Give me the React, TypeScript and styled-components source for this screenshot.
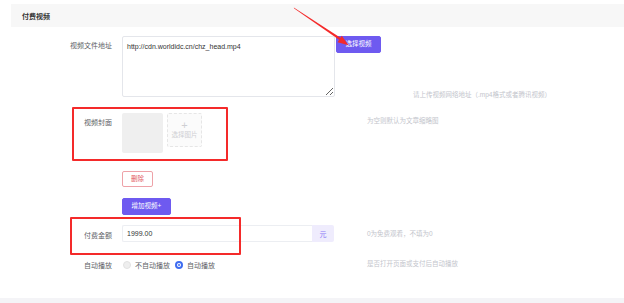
import React from 'react';
import styled, { createGlobalStyle } from 'styled-components';

const GlobalStyle = createGlobalStyle`
  html, body {
    margin: 0;
    padding: 0;
    background: #f4f4f7;
  }
  body {
    font-family: "Liberation Sans", "Noto Sans CJK SC", sans-serif;
    color: #606266;
  }
`;

const Card = styled.div`
  position: relative;
  width: 624px;
  height: 298px;
  background: #ffffff;
  padding: 4px 0 0 11px;
  box-sizing: border-box;
  overflow: hidden;
`;

const SectionHeader = styled.div`
  height: 23px;
  background: #f7f7f7;
  padding-left: 11px;
  display: flex;
  align-items: center;
  font-size: 7px;
  font-weight: bold;
  color: #333;
`;

const Form = styled.div`
  display: flex;
  flex-direction: column;
  margin-left: -11px;
`;

const Row = styled.div<{ $mt: number }>`
  display: flex;
  align-items: flex-start;
  margin-top: ${p => p.$mt}px;
`;

const Label = styled.div<{ $pt?: number }>`
  width: 122px;
  padding-right: 10px;
  padding-top: ${p => p.$pt ?? 5}px;
  box-sizing: border-box;
  text-align: right;
  font-size: 7px;
  line-height: 10px;
  color: #606266;
  flex-shrink: 0;
`;

const Indent = styled.div`
  width: 122px;
  flex-shrink: 0;
`;

const Field = styled.div`
  width: 213px;
  flex-shrink: 0;
  display: flex;
  align-items: flex-start;
`;

const TextArea = styled.textarea`
  width: 213px;
  height: 61px;
  box-sizing: border-box;
  border: 1px solid #e4e6eb;
  border-radius: 2px;
  padding: 5px 4px;
  font-family: "Liberation Sans", "Noto Sans CJK SC", sans-serif;
  font-size: 7px;
  line-height: 10px;
  color: #333;
  resize: vertical;
  outline: none;
`;

const SideColumn = styled.div`
  height: 61px;
  margin-left: 1px;
  display: flex;
  flex-direction: column;
  justify-content: space-between;
  align-items: flex-start;
`;

const Button = styled.button<{ $w: number; $h: number; $variant?: 'primary' | 'danger' }>`
  width: ${p => p.$w}px;
  height: ${p => p.$h}px;
  padding: 0;
  border-radius: 2px;
  font-family: "Liberation Sans", "Noto Sans CJK SC", sans-serif;
  font-size: 6.5px;
  line-height: 1;
  cursor: pointer;
  border: 1px solid ${p => (p.$variant === 'danger' ? '#eea2a8' : '#6e5af0')};
  background: ${p => (p.$variant === 'danger' ? '#ffffff' : '#6e5af0')};
  color: ${p => (p.$variant === 'danger' ? '#e25c64' : '#ffffff')};
`;

const Hint = styled.div<{ $ml: number; $mt?: number }>`
  margin-left: ${p => p.$ml}px;
  margin-top: ${p => p.$mt ?? 0}px;
  font-size: 6.5px;
  line-height: 10px;
  color: #c3c5cc;
  white-space: nowrap;
`;

const CoverThumb = styled.div`
  width: 41px;
  height: 40px;
  background: #efefef;
  border-radius: 2px;
`;

const UploadBox = styled.div`
  width: 35px;
  height: 34px;
  margin-left: 4px;
  box-sizing: border-box;
  border: 1px dashed #e6e6e6;
  border-radius: 2px;
  background: #fbfbfb;
  display: flex;
  flex-direction: column;
  align-items: center;
  justify-content: center;
  color: #cfcfd3;
`;

const Plus = styled.span`
  font-size: 11px;
  line-height: 10px;
  font-weight: 300;
`;

const UploadText = styled.span`
  font-size: 6.5px;
  line-height: 10px;
`;

const InputGroup = styled.div`
  display: flex;
  width: 212px;
  height: 17px;
`;

const Input = styled.input`
  flex: 1;
  min-width: 0;
  height: 17px;
  box-sizing: border-box;
  border: 1px solid #eceef2;
  border-right: none;
  border-radius: 2px 0 0 2px;
  padding: 0 4px;
  font-family: "Liberation Sans", "Noto Sans CJK SC", sans-serif;
  font-size: 7px;
  color: #333;
  outline: none;
`;

const Append = styled.div`
  width: 22px;
  height: 17px;
  background: #efecfd;
  border-radius: 0 2px 2px 0;
  display: flex;
  align-items: center;
  justify-content: center;
  font-size: 7px;
  color: #8a7af5;
`;

const RadioGroup = styled.div`
  display: flex;
  align-items: center;
  height: 14px;
  padding-left: 1px;
`;

const RadioItem = styled.label`
  display: flex;
  align-items: center;
  font-size: 7px;
  color: #606266;
  margin-right: 5px;
`;

const RadioDot = styled.span<{ $checked?: boolean }>`
  width: 8px;
  height: 8px;
  border-radius: 50%;
  box-sizing: border-box;
  margin-right: 4px;
  display: inline-flex;
  align-items: center;
  justify-content: center;
  border: ${p => (p.$checked ? '2px solid #3e6cf0' : '1px solid #e2e2e2')};
  background: ${p => (p.$checked ? '#ffffff' : '#eeeeee')};

  &::after {
    content: '';
    display: ${p => (p.$checked ? 'block' : 'none')};
    width: 2px;
    height: 2px;
    border-radius: 50%;
    background: #3e6cf0;
  }
`;

const Annotation = styled.div<{ $x: number; $y: number; $w: number; $h: number }>`
  position: absolute;
  left: ${p => p.$x}px;
  top: ${p => p.$y}px;
  width: ${p => p.$w}px;
  height: ${p => p.$h}px;
  border: 2px solid #f42a2a;
  border-radius: 1px;
  box-sizing: border-box;
  pointer-events: none;
`;

const ArrowLayer = styled.svg`
  position: absolute;
  left: 0;
  top: 0;
  pointer-events: none;
`;

const App: React.FC = () => {
  return (
    <>
      <GlobalStyle />
      <Card>
        <SectionHeader>付费视频</SectionHeader>
        <Form>
          <Row $mt={9}>
            <Label>视频文件地址</Label>
            <TextArea defaultValue="http://cdn.worldidc.cn/chz_head.mp4" />
            <SideColumn>
              <Button $w={45} $h={17}>选择视频</Button>
              <Hint $ml={77} style={{ marginBottom: -3 }}>
                请上传视频网络地址（.mp4格式或者腾讯视频）
              </Hint>
            </SideColumn>
          </Row>

          <Row $mt={16}>
            <Label>视频封面</Label>
            <Field>
              <CoverThumb />
              <UploadBox>
                <Plus>+</Plus>
                <UploadText>选择图片</UploadText>
              </UploadBox>
            </Field>
            <Hint $ml={32} $mt={3}>为空则默认为文章缩略图</Hint>
          </Row>

          <Row $mt={18}>
            <Indent />
            <Button $w={31} $h={16} $variant="danger">删除</Button>
          </Row>

          <Row $mt={11}>
            <Indent />
            <Button $w={49} $h={17}>增加视频+</Button>
          </Row>

          <Row $mt={10}>
            <Label $pt={6}>付费金额</Label>
            <Field>
              <InputGroup>
                <Input defaultValue="1999.00" />
                <Append>元</Append>
              </InputGroup>
            </Field>
            <Hint $ml={32} $mt={4}>0为免费观看，不填为0</Hint>
          </Row>

          <Row $mt={16}>
            <Label $pt={3}>自动播放</Label>
            <Field>
              <RadioGroup>
                <RadioItem>
                  <RadioDot />
                  不自动播放
                </RadioItem>
                <RadioItem>
                  <RadioDot $checked />
                  自动播放
                </RadioItem>
              </RadioGroup>
            </Field>
            <Hint $ml={32} $mt={1}>是否打开页面或支付后自动播放</Hint>
          </Row>
        </Form>

        <Annotation $x={72} $y={107} $w={156} $h={54} />
        <Annotation $x={70} $y={217} $w={171} $h={38} />

        <ArrowLayer width="624" height="298" viewBox="0 0 624 298">
          <polygon points="293.8,7.6 294.2,8.4 341.2,41.2 342.4,39.0" fill="#f42a2a" />
          <polygon points="348.5,45.2 337.6,42.2 341.8,35.8" fill="#f42a2a" />
        </ArrowLayer>
      </Card>
    </>
  );
};

export default App;
